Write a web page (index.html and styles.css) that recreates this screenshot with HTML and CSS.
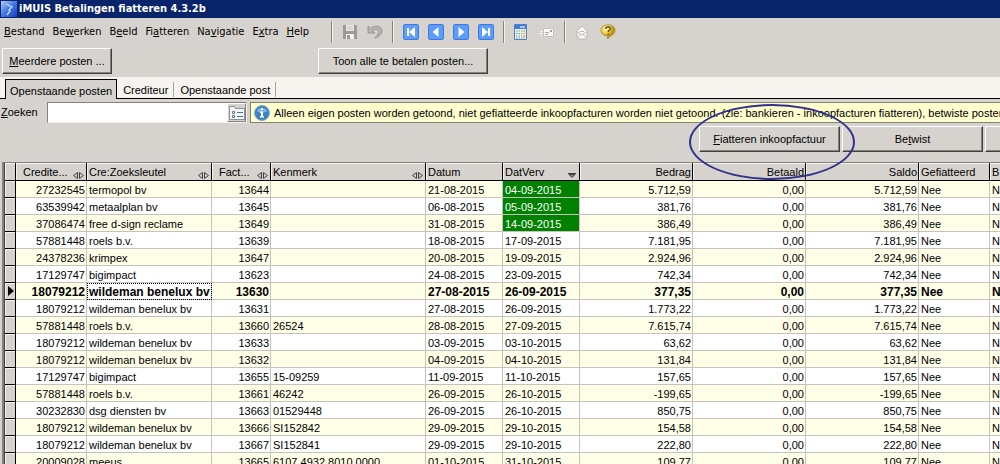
FILE: index.html
```
<!DOCTYPE html>
<html lang="nl">
<head>
<meta charset="utf-8">
<title>iMUIS Betalingen fiatteren 4.3.2b</title>
<link rel="stylesheet" href="styles.css">
</head>
<body>
<div class="window">
  <header class="titlebar">
    <svg class="app-icon" width="16" height="16" viewBox="0 0 16 16" aria-hidden="true"><defs><linearGradient id="app" x2="1" y2="1"><stop offset="0" stop-color="#b4ccf8"/><stop offset=".45" stop-color="#4a7de8"/><stop offset="1" stop-color="#123cc0"/></linearGradient></defs><rect width="16" height="16" fill="url(#app)"/><path d="M5 3l6 3-3 3 1 1-3 4" fill="none" stroke="#c6daff" stroke-width="1.3"/></svg>
    <h1 class="title">iMUIS Betalingen fiatteren 4.3.2b</h1>
  </header>

  <div class="menubar">
    <nav class="menu">
      <a href="#"><u>B</u>estand</a><a href="#">Be<u>w</u>erken</a><a href="#">B<u>e</u>eld</a><a href="#">Fi<u>a</u>tteren</a><a href="#">Na<u>v</u>igatie</a><a href="#">E<u>x</u>tra</a><a href="#"><u>H</u>elp</a>
    </nav>
    <div class="toolbar">
      <div class="tool-group">
        <button class="tool" aria-label="Opslaan"><svg width="16" height="16" viewBox="0 0 16 16"><path d="M1 1h13l1 1v13H1z" fill="#9b9b9b"/><path d="M4 1h8v6H4z" fill="#e9e9e7"/><path d="M5 3h6M5 5h6" stroke="#c2c2c0"/><path d="M4 10h8v5H4z" fill="#f5f5f3"/><path d="M5 11h3v4H5z" fill="#999"/></svg></button>
        <button class="tool" aria-label="Ongedaan maken"><svg width="16" height="16" viewBox="0 0 16 16"><path d="M1 2v7h7L5.500 6.800C8 4.500 12 5 11.500 8.500 11 10.500 9.500 12 7.500 14 12 13 15 10.500 15 7 15 2 8 .5 3.500 4.500z" fill="#b5b5b3" stroke="#8c8c8c" stroke-width=".8"/></svg></button>
      </div>
      <div class="tool-group">
        <button class="tool" aria-label="Eerste"><svg width="16" height="16" viewBox="0 0 16 16"><rect x=".5" y=".5" width="15" height="15" rx="1.5" fill="#5a9dff" stroke="#4279d8"/><path d="M4 4h2v8H4zM12 3v10L6 8z" fill="#fff"/></svg></button>
        <button class="tool" aria-label="Vorige"><svg width="16" height="16" viewBox="0 0 16 16"><rect x=".5" y=".5" width="15" height="15" rx="1.5" fill="#5a9dff" stroke="#4279d8"/><path d="M10.500 3v10L4.500 8z" fill="#fff"/></svg></button>
        <button class="tool" aria-label="Volgende"><svg width="16" height="16" viewBox="0 0 16 16"><rect x=".5" y=".5" width="15" height="15" rx="1.5" fill="#5a9dff" stroke="#4279d8"/><path d="M5.500 3v10l6-5z" fill="#fff"/></svg></button>
        <button class="tool" aria-label="Laatste"><svg width="16" height="16" viewBox="0 0 16 16"><rect x=".5" y=".5" width="15" height="15" rx="1.5" fill="#5a9dff" stroke="#4279d8"/><path d="M10 4h2v8h-2zM4 3v10l6-5z" fill="#fff"/></svg></button>
      </div>
      <div class="tool-group">
        <button class="tool" aria-label="Rekenmachine"><svg width="16" height="16" viewBox="0 0 16 16"><path d="M.5.500h12v15H.5z" fill="#f5f3df" stroke="#557fc4"/><path d="M1 1h11v4H1z" fill="#3f79df"/><path d="M6 2h5v2H6z" fill="#a5ccff"/><path d="M2 7h9M2 9.500h9M2 12h9M2 14h9" stroke="#6d9ad8" stroke-dasharray="1.500 1"/><path d="M10.500 6v8" stroke="#e0bc58" stroke-width="1.500" stroke-dasharray="1.500 1"/></svg></button>
        <button class="tool" aria-label="Verzenden"><svg width="16" height="16" viewBox="0 0 16 16"><path d="M4.500 4.500h10v8h-10z" fill="#fafaf8" stroke="#c2beb8"/><path d="M6 8.500h4M6 10.500h3" stroke="#aaa7a4"/><path d="M11 6h2v2h-2z" fill="#999"/><path d="M1 7.500h3M0 9.500h4M2 11.500h2" stroke="#f3f1ee"/></svg></button>
      </div>
      <div class="tool-group">
        <button class="tool" aria-label="E-mail"><svg width="16" height="16" viewBox="0 0 16 16"><path d="M2 7l5-5 5 5v8H2z" fill="#fafaf8" stroke="#bcb9b3"/><path d="M2.500 8l4.500 3 4.500-3M2.500 14.500l3-4M11.500 14.500l-3-4M5 7.500h4" fill="none" stroke="#b9b6b1"/></svg></button>
        <button class="tool" aria-label="Help"><svg width="16" height="16" viewBox="0 0 17 17"><defs><radialGradient id="help" cx=".35" cy=".3"><stop stop-color="#fff9b2"/><stop offset=".6" stop-color="#efcf43"/><stop offset="1" stop-color="#bb9418"/></radialGradient></defs><path d="M8.500.8c4 0 7.500 2.400 7.500 6 0 2.800-2 4.800-4.500 5.600L8 16v-3.200C4 12.500 1 10 1 6.800 1 3.200 4.500.8 8.500.8z" fill="url(#help)" stroke="#a48c41" stroke-width=".8"/><path d="M6 5.300C6 2.500 11.300 2.500 11 5.300 10.800 6.800 8.700 6.900 8.700 8.500M8.700 9.800v1.500" fill="none" stroke="#5e542c" stroke-width="1.500"/></svg></button>
      </div>
    </div>
  </div>

  <div class="commands">
    <button class="btn btn-left"><u>M</u>eerdere posten ...</button>
    <button class="btn btn-wide">Toon alle te betalen posten...</button>
  </div>

  <div class="tabs" role="tablist">
    <button class="tab active" role="tab" aria-selected="true">Openstaande posten</button>
    <button class="tab" role="tab" aria-selected="false">Crediteur</button>
    <button class="tab" role="tab" aria-selected="false">Openstaande post</button>
  </div>

  <div class="search-row">
    <label for="search"><u>Z</u>oeken</label>
    <div class="search-field">
      <input id="search" type="text">
      <button class="lookup" aria-label="Opties"><svg width="16" height="14" viewBox="0 0 16 14"><path d="M.5 3.500V.5h5l1 2h9v11H.5z" fill="#f2f4f6" stroke="#8d9296"/><path d="M3.500 5.500h2v2h-2zM3.500 9.500h2v2h-2z" fill="#fff" stroke="#6f7376"/><path d="M8 6.500h6M8 10.500h6" stroke="#3d7aa8"/></svg></button>
    </div>
    <p class="notice"><svg width="16" height="16" viewBox="0 0 16 16" aria-hidden="true"><circle cx="8" cy="8" r="7.500" fill="#3c80c9" stroke="#8eaac5"/><path d="M2.500 6a6 5 0 0 1 11 0q-5 3-11 0" fill="#80b4e8"/><path d="M7 3h2v2H7zM6 6.500h3V11h1v1.500H6V11h1V8H6z" fill="#fff"/></svg><span>Alleen eigen posten worden getoond, niet gefiatteerde inkoopfacturen worden niet getoond. (zie: bankieren - inkoopfacturen fiatteren), betwiste posten wo</span></p>
  </div>

  <div class="actions">
    <div class="marked"><button class="btn"><u>F</u>iatteren inkoopfactuur</button><span class="marker"></span></div>
    <button class="btn">Be<u>t</u>wist</button>
    <button class="btn" aria-label="Volgende actie"></button>
  </div>

  <main class="grid">
    <table>
      <colgroup><col class="c-ind"><col class="c-cred"><col class="c-key"><col class="c-fact"><col class="c-ref"><col class="c-date"><col class="c-date"><col class="c-sum"><col class="c-sum"><col class="c-sum"><col class="c-flag"><col class="c-flag"></colgroup>
      <thead>
        <tr>
          <th></th>
          <th><div class="head mid"><span>Credite...</span><svg class="arrows" width="11" height="7" viewBox="0 0 11 7"><path d="M4.500.5v6l-4-3zM6.500.5v6l4-3z"/></svg></div></th>
          <th><div class="head"><span>Cre:Zoeksleutel</span><svg class="arrows" width="11" height="7" viewBox="0 0 11 7"><path d="M4.500.5v6l-4-3zM6.500.5v6l4-3z"/></svg></div></th>
          <th><div class="head mid"><span>Fact...</span><svg class="arrows" width="11" height="7" viewBox="0 0 11 7"><path d="M4.500.5v6l-4-3zM6.500.5v6l4-3z"/></svg></div></th>
          <th><div class="head"><span>Kenmerk</span><svg class="arrows" width="11" height="7" viewBox="0 0 11 7"><path d="M4.500.5v6l-4-3zM6.500.5v6l4-3z"/></svg></div></th>
          <th>Datum</th>
          <th><div class="head"><span>DatVerv</span><svg class="arrows" width="9" height="6" viewBox="0 0 9 6"><path d="M1 1.500h6L4 4.500z" fill="#888"/><path d="M0 .5h8"/></svg></div></th>
          <th class="num">Bedrag</th><th class="num">Betaald</th><th class="num">Saldo</th><th>Gefiatteerd</th><th>B</th>
        </tr>
      </thead>
      <tbody>
        <tr><th></th><td class="num">27232545</td><td>termopol bv</td><td class="num">13644</td><td></td><td>21-08-2015</td><td class="due">04-09-2015</td><td class="num">5.712,59</td><td class="num">0,00</td><td class="num">5.712,59</td><td>Nee</td><td>N</td></tr>
        <tr><th></th><td class="num">63539942</td><td>metaalplan bv</td><td class="num">13645</td><td></td><td>06-08-2015</td><td class="due">05-09-2015</td><td class="num">381,76</td><td class="num">0,00</td><td class="num">381,76</td><td>Nee</td><td>N</td></tr>
        <tr><th></th><td class="num">37086474</td><td>free d-sign reclame</td><td class="num">13649</td><td></td><td>31-08-2015</td><td class="due">14-09-2015</td><td class="num">386,49</td><td class="num">0,00</td><td class="num">386,49</td><td>Nee</td><td>N</td></tr>
        <tr><th></th><td class="num">57881448</td><td>roels b.v.</td><td class="num">13639</td><td></td><td>18-08-2015</td><td>17-09-2015</td><td class="num">7.181,95</td><td class="num">0,00</td><td class="num">7.181,95</td><td>Nee</td><td>N</td></tr>
        <tr><th></th><td class="num">24378236</td><td>krimpex</td><td class="num">13647</td><td></td><td>20-08-2015</td><td>19-09-2015</td><td class="num">2.924,96</td><td class="num">0,00</td><td class="num">2.924,96</td><td>Nee</td><td>N</td></tr>
        <tr><th></th><td class="num">17129747</td><td>bigimpact</td><td class="num">13623</td><td></td><td>24-08-2015</td><td>23-09-2015</td><td class="num">742,34</td><td class="num">0,00</td><td class="num">742,34</td><td>Nee</td><td>N</td></tr>
        <tr class="current"><th><svg class="pointer" width="7" height="10" viewBox="0 0 7 10"><path d="M1 0l6 5-6 5z"/></svg></th><td class="num">18079212</td><td class="focus">wildeman benelux bv</td><td class="num">13630</td><td></td><td>27-08-2015</td><td>26-09-2015</td><td class="num">377,35</td><td class="num">0,00</td><td class="num">377,35</td><td>Nee</td><td>N</td></tr>
        <tr><th></th><td class="num">18079212</td><td>wildeman benelux bv</td><td class="num">13631</td><td></td><td>27-08-2015</td><td>26-09-2015</td><td class="num">1.773,22</td><td class="num">0,00</td><td class="num">1.773,22</td><td>Nee</td><td>N</td></tr>
        <tr><th></th><td class="num">57881448</td><td>roels b.v.</td><td class="num">13660</td><td>26524</td><td>28-08-2015</td><td>27-09-2015</td><td class="num">7.615,74</td><td class="num">0,00</td><td class="num">7.615,74</td><td>Nee</td><td>N</td></tr>
        <tr><th></th><td class="num">18079212</td><td>wildeman benelux bv</td><td class="num">13633</td><td></td><td>03-09-2015</td><td>03-10-2015</td><td class="num">63,62</td><td class="num">0,00</td><td class="num">63,62</td><td>Nee</td><td>N</td></tr>
        <tr><th></th><td class="num">18079212</td><td>wildeman benelux bv</td><td class="num">13632</td><td></td><td>04-09-2015</td><td>04-10-2015</td><td class="num">131,84</td><td class="num">0,00</td><td class="num">131,84</td><td>Nee</td><td>N</td></tr>
        <tr><th></th><td class="num">17129747</td><td>bigimpact</td><td class="num">13655</td><td>15-09259</td><td>11-09-2015</td><td>11-10-2015</td><td class="num">157,65</td><td class="num">0,00</td><td class="num">157,65</td><td>Nee</td><td>N</td></tr>
        <tr><th></th><td class="num">57881448</td><td>roels b.v.</td><td class="num">13661</td><td>46242</td><td>26-09-2015</td><td>26-10-2015</td><td class="num">-199,65</td><td class="num">0,00</td><td class="num">-199,65</td><td>Nee</td><td>N</td></tr>
        <tr><th></th><td class="num">30232830</td><td>dsg diensten bv</td><td class="num">13663</td><td>01529448</td><td>26-09-2015</td><td>26-10-2015</td><td class="num">850,75</td><td class="num">0,00</td><td class="num">850,75</td><td>Nee</td><td>N</td></tr>
        <tr><th></th><td class="num">18079212</td><td>wildeman benelux bv</td><td class="num">13666</td><td>SI152842</td><td>29-09-2015</td><td>29-10-2015</td><td class="num">154,58</td><td class="num">0,00</td><td class="num">154,58</td><td>Nee</td><td>N</td></tr>
        <tr><th></th><td class="num">18079212</td><td>wildeman benelux bv</td><td class="num">13667</td><td>SI152841</td><td>29-09-2015</td><td>29-10-2015</td><td class="num">222,80</td><td class="num">0,00</td><td class="num">222,80</td><td>Nee</td><td>N</td></tr>
        <tr><th></th><td class="num">20009028</td><td>meeus</td><td class="num">13665</td><td>6107.4932.8010.0000</td><td>01-10-2015</td><td>31-10-2015</td><td class="num">109,77</td><td class="num">0,00</td><td class="num">109,77</td><td>Nee</td><td>N</td></tr>
      </tbody>
    </table>
  </main>
</div>
</body>
</html>
```
FILE: styles.css
```
* { box-sizing: border-box; }

body {
  margin: 0;
  background: #d6d3ce;
  color: #000;
  font: 11px/14px "Liberation Sans", Arial, sans-serif;
}

button, input { font: inherit; color: inherit; }

.window {
  display: flex;
  flex-direction: column;
  height: 100vh;
  overflow: hidden;
  white-space: nowrap;
}
.window > * { flex-shrink: 0; }

.titlebar {
  display: flex;
  align-items: center;
  gap: 2px;
  height: 18px;
  padding-left: 1px;
  background: #08246b;
  color: #fff;
}
.title { margin: 0; font: bold 11px/16px "DejaVu Sans Condensed", Tahoma, sans-serif; }

.menubar { display: flex; height: 29px; }
.menu {
  display: flex;
  gap: 8px;
  width: 331px;
  padding: 7px 0 0 4px;
  font-family: "DejaVu Sans Condensed", Tahoma, sans-serif;
}
.menu a { color: inherit; text-decoration: none; }

.toolbar { display: flex; padding-top: 3px; }
.tool-group {
  display: flex;
  align-items: center;
  gap: 9px;
  height: 22px;
  padding: 0 9px 0 10px;
  border-left: 1px solid #84827b;
  box-shadow: inset 1px 0 #f4f2ef;
}
.tool { display: flex; width: 16px; padding: 0; border: 0; background: none; }

.commands { display: flex; gap: 206px; height: 30px; padding: 1px 2px 3px; }
.btn {
  width: 141px;
  height: 26px;
  padding: 0 2px;
  border: 1px solid;
  border-color: #fff #424142 #424142 #fff;
  box-shadow: inset -1px -1px #84827b;
  background: #d6d3ce;
}
.btn-left { width: 110px; }
.btn-wide { width: 170px; }

.tabs {
  display: flex;
  align-items: flex-end;
  height: 22px;
  padding-left: 5px;
  border-bottom: 1px solid #000;
  background: #f7f3ef;
}
.tab {
  height: 15px;
  margin-bottom: 1px;
  padding: 1px 5px 0 6px;
  border: 0;
  border-right: 1px solid #a5a29c;
  background: none;
}
.tab.active {
  height: 20px;
  margin-bottom: -1px;
  padding: 2px 4px 0;
  border: 1px solid #000;
  border-width: 1px 1px 0;
  background: #d6d3ce;
}

.search-row { display: flex; height: 27px; padding: 3px 0 3px 1px; }
.search-row label { width: 46px; padding-top: 3px; }
.search-field {
  display: flex;
  width: 200px;
  height: 21px;
  border: 1px solid;
  border-color: #84827b #f4f2ef #f4f2ef #84827b;
  background: #fff;
}
.search-field input { flex: 1; min-width: 0; padding: 0 3px; border: 0; outline: 0; background: none; }
.lookup {
  display: flex;
  align-items: center;
  justify-content: center;
  width: 19px;
  padding: 0;
  border: 1px solid;
  border-color: #fff #84827b #84827b #fff;
  background: #d6d3ce;
}
.notice {
  display: flex;
  flex: 1;
  align-items: center;
  gap: 4px;
  min-width: 0;
  height: 21px;
  margin: 0 0 0 3px;
  padding-left: 3px;
  overflow: hidden;
  border: 1px solid #848273;
  border-right: 0;
  background: #ffffce;
}
.notice svg { flex: none; }

.actions { display: flex; gap: 2px; height: 36px; padding-left: 699px; }
.actions .btn { flex: none; }
.marked { position: relative; }
.marker {
  position: absolute;
  z-index: 1;
  top: -22px;
  left: -10px;
  width: 166px;
  height: 76px;
  border: 2px solid #31308c;
  border-radius: 50%;
  pointer-events: none;
}

.grid { margin-left: 2px; border: 1px solid #84827b; border-width: 1px 0 0 2px; }
table {
  width: 1056px;
  border-collapse: separate;
  border-spacing: 0;
  table-layout: fixed;
  border-left: 1px solid #424142;
}
.c-ind { width: 11px; }
.c-cred { width: 71px; }
.c-key { width: 125px; }
.c-fact { width: 59px; }
.c-ref { width: 155px; }
.c-date { width: 77px; }
.c-sum { width: 113px; }
.c-flag { width: 71px; }

th {
  padding: 0 1px 0 2px;
  border-right: 1px solid #000;
  border-bottom: 1px solid #000;
  background: #d6d3ce;
  box-shadow: inset 1px 1px #f4f2ef;
  font-weight: normal;
  text-align: left;
}
thead th { height: 18px; padding-top: 1px; line-height: 15px; }
.head { display: flex; align-items: flex-end; justify-content: space-between; }
.head.mid span { padding-left: 5px; }
.arrows { margin: 0 1px 1px 0; fill: none; stroke: #424142; stroke-width: 1; }
td {
  height: 17px;
  padding: 1px 1px 0 2px;
  overflow: hidden;
  border-right: 1px solid #c6c3bd;
  border-bottom: 1px solid #c6c3bd;
  background: #fff;
}
tbody tr:nth-child(odd) td { background: #ffffe7; }
th.num, td.num { text-align: right; }
tbody tr td.due { background: #008200; color: #fff; }
.current td { font-size: 12px; font-weight: bold; }
tbody tr.current td.focus { background: #fff; outline: 1px dotted #000; outline-offset: -1px; }
.pointer { display: block; }
```
